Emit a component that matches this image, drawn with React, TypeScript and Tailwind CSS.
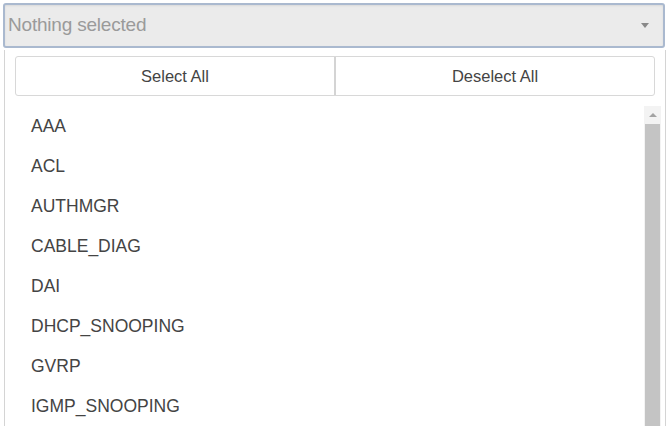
const items = [
  "AAA",
  "ACL",
  "AUTHMGR",
  "CABLE_DIAG",
  "DAI",
  "DHCP_SNOOPING",
  "GVRP",
  "IGMP_SNOOPING",
];

export default function App() {
  return (
    <div
      className="h-[428px] w-[669px] overflow-hidden bg-white"
      style={{ fontFamily: '"Liberation Sans", Arial, sans-serif' }}
    >
      <div className="pl-[3px] pr-[4px] pt-[3px]">
        {/* Select toggle */}
        <div className="flex h-[45px] items-center justify-between rounded-[3px] border-2 border-[#aab9cf] bg-[#ebebeb] pl-[3px] pr-[14px] shadow-[inset_0_1px_2px_rgba(0,0,0,0.08)]">
          <span className="text-[19px] tracking-[-0.2px] text-[#9a9a9a]">Nothing selected</span>
          <span className="h-0 w-0 border-x-[4px] border-t-[5px] border-x-transparent border-t-[#888]" />
        </div>

        {/* Dropdown menu */}
        <div className="ml-[1px] mr-[-1px] mt-[2px] border-l border-r border-[#d4d4d4] bg-white">
          <div className="flex pl-[10px] pr-[10px] pt-[6px]">
            <div className="flex h-[40px] w-full rounded-[3px] border border-[#d8d8d8]">
              <div className="flex flex-1 items-center justify-center border-r-2 border-[#d4d4d4] text-[16.5px] text-[#444]">
                Select All
              </div>
              <div className="flex flex-1 items-center justify-center text-[16.5px] text-[#444]">
                Deselect All
              </div>
            </div>
          </div>

          <div className="mt-[10px] flex">
            <ul className="flex-1 pl-[26px]">
              {items.map((it) => (
                <li key={it} className="flex h-[40px] items-center text-[17.5px] text-[#444]">
                  {it}
                </li>
              ))}
            </ul>
            {/* Scrollbar */}
            <div className="mr-[4px] flex w-[17px] flex-col bg-[#f3f3f3]">
              <div className="flex h-[18px] items-center justify-center">
                <span className="h-0 w-0 border-x-[4px] border-b-[4px] border-x-transparent border-b-[#a3a3a3]" />
              </div>
              <div className="mx-[1px] flex-1 bg-[#c4c4c4]" />
            </div>
          </div>
        </div>
      </div>
    </div>
  );
}
